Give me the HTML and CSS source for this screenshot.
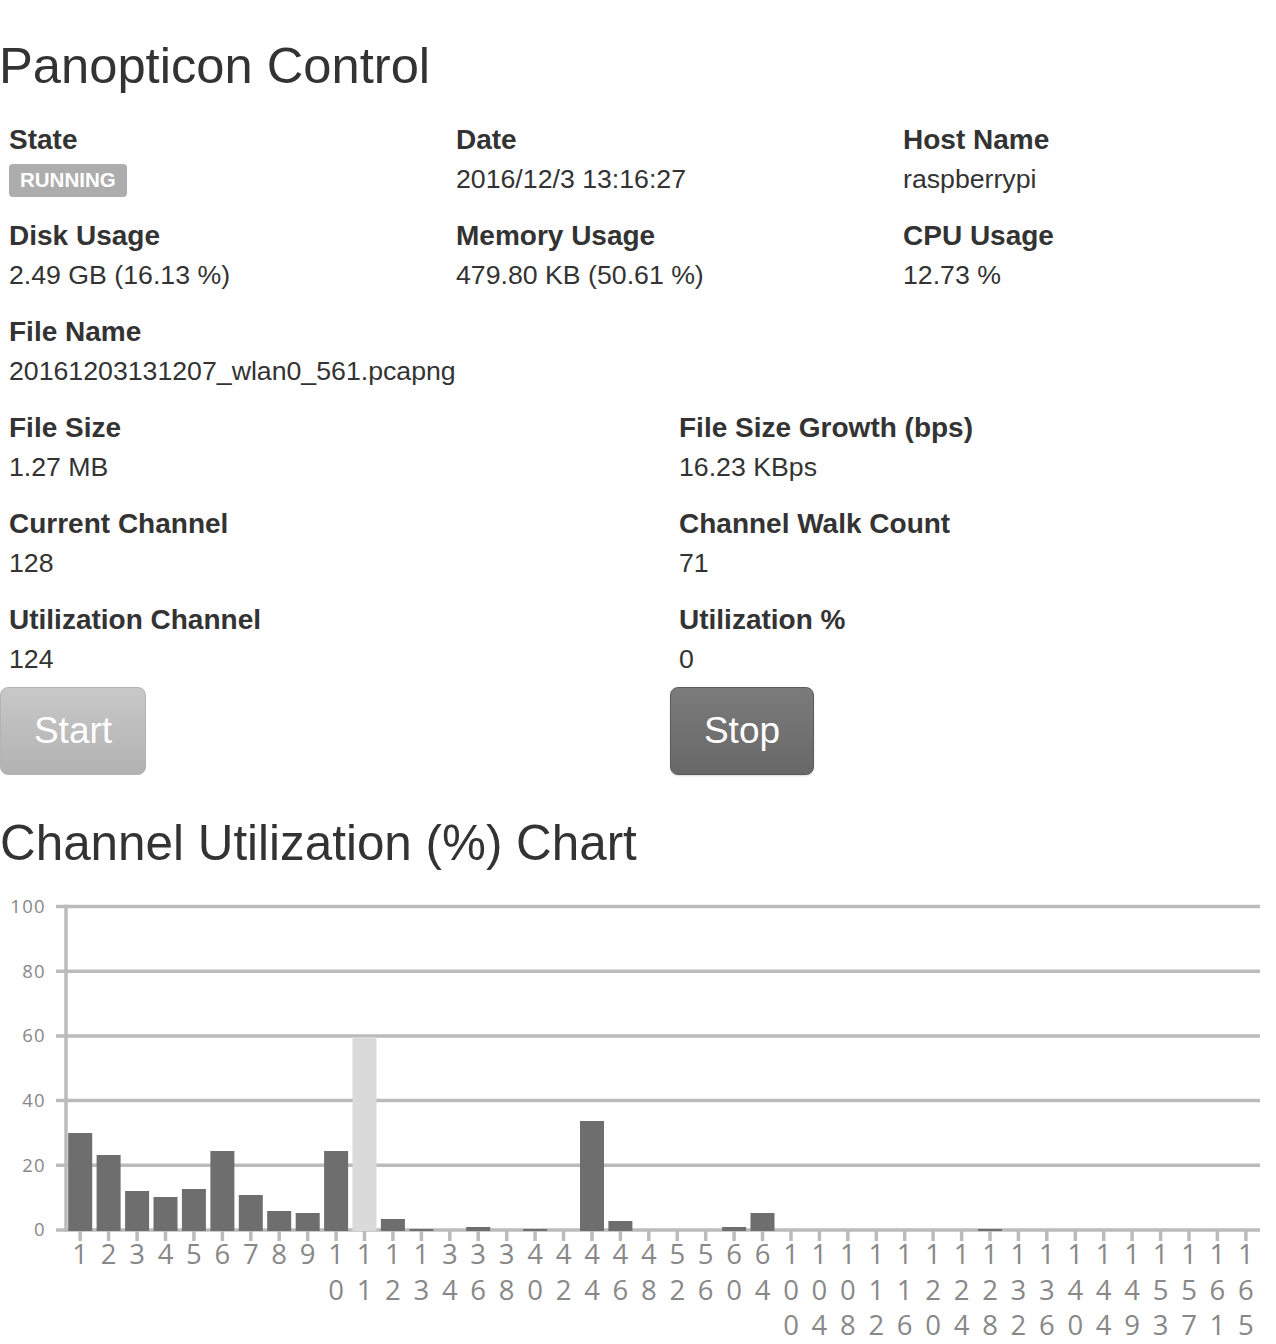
FILE: index.html
```html
<!DOCTYPE html>
<html lang="en">
<head>
<meta charset="utf-8">
<title>Panopticon Control</title>
<link rel="stylesheet" href="styles.css">
</head>
<body>
<main class="page">
  <h1 class="title">Panopticon Control</h1>

  <section class="grid3">
    <div class="field"><div class="label">State</div><div class="value"><span class="badge">RUNNING</span></div></div>
    <div class="field"><div class="label">Date</div><div class="value">2016/12/3 13:16:27</div></div>
    <div class="field"><div class="label">Host Name</div><div class="value">raspberrypi</div></div>
    <div class="field"><div class="label">Disk Usage</div><div class="value">2.49 GB (16.13 %)</div></div>
    <div class="field"><div class="label">Memory Usage</div><div class="value">479.80 KB (50.61 %)</div></div>
    <div class="field"><div class="label">CPU Usage</div><div class="value">12.73 %</div></div>
    <div class="field"><div class="label">File Name</div><div class="value">20161203131207_wlan0_561.pcapng</div></div>
  </section>

  <section class="grid2">
    <div class="field"><div class="label">File Size</div><div class="value">1.27 MB</div></div>
    <div class="field"><div class="label">File Size Growth (bps)</div><div class="value">16.23 KBps</div></div>
    <div class="field"><div class="label">Current Channel</div><div class="value">128</div></div>
    <div class="field"><div class="label">Channel Walk Count</div><div class="value">71</div></div>
    <div class="field"><div class="label">Utilization Channel</div><div class="value">124</div></div>
    <div class="field"><div class="label">Utilization %</div><div class="value">0</div></div>
  </section>

  <section class="actions">
    <div><button class="btn btn-start" type="button">Start</button></div>
    <div><button class="btn btn-stop" type="button">Stop</button></div>
  </section>

  <h2 class="chart-title">Channel Utilization (%) Chart</h2>

  <svg class="chart" width="1276" height="454" viewBox="0 890 1276 454" xmlns="http://www.w3.org/2000/svg">
    <g class="grid-lines">
      <line x1="56" y1="907.5" x2="1260" y2="907.5"/>
      <line x1="56" y1="972.2" x2="1260" y2="972.2"/>
      <line x1="56" y1="1036.9" x2="1260" y2="1036.9"/>
      <line x1="56" y1="1101.6" x2="1260" y2="1101.6"/>
      <line x1="56" y1="1166.3" x2="1260" y2="1166.3"/>
      <line x1="56" y1="1231" x2="1260" y2="1231"/>
      <line x1="66" y1="905.75" x2="66" y2="1232.75"/>
    </g>
    <g class="axis-y">
      <text x="46" y="913.8">100</text>
      <text x="46" y="978.5">80</text>
      <text x="46" y="1043.2">60</text>
      <text x="46" y="1107.9">40</text>
      <text x="46" y="1172.6">20</text>
      <text x="46" y="1237.3">0</text>
    </g>
    <g class="bars">
      <rect x="68.2" y="1134" width="24" height="98"/>
      <rect x="96.6" y="1156" width="24" height="76"/>
      <rect x="125.1" y="1192" width="24" height="40"/>
      <rect x="153.5" y="1198" width="24" height="34"/>
      <rect x="181.9" y="1190" width="24" height="42"/>
      <rect x="210.4" y="1152" width="24" height="80"/>
      <rect x="238.8" y="1196" width="24" height="36"/>
      <rect x="267.2" y="1212" width="24" height="20"/>
      <rect x="295.7" y="1214" width="24" height="18"/>
      <rect x="324.1" y="1152" width="24" height="80"/>
      <rect class="bar-hl" x="352.5" y="1038" width="24" height="194"/>
      <rect x="380.9" y="1220" width="24" height="12"/>
      <rect x="409.4" y="1230" width="24" height="2"/>
      <rect x="466.2" y="1228" width="24" height="4"/>
      <rect x="523.1" y="1230" width="24" height="2"/>
      <rect x="580" y="1122" width="24" height="110"/>
      <rect x="608.4" y="1222" width="24" height="10"/>
      <rect x="722.1" y="1228" width="24" height="4"/>
      <rect x="750.5" y="1214" width="24" height="18"/>
      <rect x="978" y="1230" width="24" height="2"/>
    </g>
    <g class="ticks">
      <line x1="80.2" y1="1232" x2="80.2" y2="1242"/>
      <line x1="108.6" y1="1232" x2="108.6" y2="1242"/>
      <line x1="137.1" y1="1232" x2="137.1" y2="1242"/>
      <line x1="165.5" y1="1232" x2="165.5" y2="1242"/>
      <line x1="193.9" y1="1232" x2="193.9" y2="1242"/>
      <line x1="222.4" y1="1232" x2="222.4" y2="1242"/>
      <line x1="250.8" y1="1232" x2="250.8" y2="1242"/>
      <line x1="279.2" y1="1232" x2="279.2" y2="1242"/>
      <line x1="307.7" y1="1232" x2="307.7" y2="1242"/>
      <line x1="336.1" y1="1232" x2="336.1" y2="1242"/>
      <line x1="364.5" y1="1232" x2="364.5" y2="1242"/>
      <line x1="392.9" y1="1232" x2="392.9" y2="1242"/>
      <line x1="421.4" y1="1232" x2="421.4" y2="1242"/>
      <line x1="449.8" y1="1232" x2="449.8" y2="1242"/>
      <line x1="478.2" y1="1232" x2="478.2" y2="1242"/>
      <line x1="506.7" y1="1232" x2="506.7" y2="1242"/>
      <line x1="535.1" y1="1232" x2="535.1" y2="1242"/>
      <line x1="563.5" y1="1232" x2="563.5" y2="1242"/>
      <line x1="592" y1="1232" x2="592" y2="1242"/>
      <line x1="620.4" y1="1232" x2="620.4" y2="1242"/>
      <line x1="648.8" y1="1232" x2="648.8" y2="1242"/>
      <line x1="677.3" y1="1232" x2="677.3" y2="1242"/>
      <line x1="705.7" y1="1232" x2="705.7" y2="1242"/>
      <line x1="734.1" y1="1232" x2="734.1" y2="1242"/>
      <line x1="762.5" y1="1232" x2="762.5" y2="1242"/>
      <line x1="791" y1="1232" x2="791" y2="1242"/>
      <line x1="819.4" y1="1232" x2="819.4" y2="1242"/>
      <line x1="847.8" y1="1232" x2="847.8" y2="1242"/>
      <line x1="876.3" y1="1232" x2="876.3" y2="1242"/>
      <line x1="904.7" y1="1232" x2="904.7" y2="1242"/>
      <line x1="933.1" y1="1232" x2="933.1" y2="1242"/>
      <line x1="961.6" y1="1232" x2="961.6" y2="1242"/>
      <line x1="990" y1="1232" x2="990" y2="1242"/>
      <line x1="1018.4" y1="1232" x2="1018.4" y2="1242"/>
      <line x1="1046.8" y1="1232" x2="1046.8" y2="1242"/>
      <line x1="1075.3" y1="1232" x2="1075.3" y2="1242"/>
      <line x1="1103.7" y1="1232" x2="1103.7" y2="1242"/>
      <line x1="1132.1" y1="1232" x2="1132.1" y2="1242"/>
      <line x1="1160.6" y1="1232" x2="1160.6" y2="1242"/>
      <line x1="1189" y1="1232" x2="1189" y2="1242"/>
      <line x1="1217.4" y1="1232" x2="1217.4" y2="1242"/>
      <line x1="1245.9" y1="1232" x2="1245.9" y2="1242"/>
    </g>
    <g class="axis-x">
      <text><tspan x="80.2" y="1265">1</tspan></text>
      <text><tspan x="108.6" y="1265">2</tspan></text>
      <text><tspan x="137.1" y="1265">3</tspan></text>
      <text><tspan x="165.5" y="1265">4</tspan></text>
      <text><tspan x="193.9" y="1265">5</tspan></text>
      <text><tspan x="222.4" y="1265">6</tspan></text>
      <text><tspan x="250.8" y="1265">7</tspan></text>
      <text><tspan x="279.2" y="1265">8</tspan></text>
      <text><tspan x="307.7" y="1265">9</tspan></text>
      <text><tspan x="336.1" y="1265">1</tspan><tspan x="336.1" y="1300.5">0</tspan></text>
      <text><tspan x="364.5" y="1265">1</tspan><tspan x="364.5" y="1300.5">1</tspan></text>
      <text><tspan x="392.9" y="1265">1</tspan><tspan x="392.9" y="1300.5">2</tspan></text>
      <text><tspan x="421.4" y="1265">1</tspan><tspan x="421.4" y="1300.5">3</tspan></text>
      <text><tspan x="449.8" y="1265">3</tspan><tspan x="449.8" y="1300.5">4</tspan></text>
      <text><tspan x="478.2" y="1265">3</tspan><tspan x="478.2" y="1300.5">6</tspan></text>
      <text><tspan x="506.7" y="1265">3</tspan><tspan x="506.7" y="1300.5">8</tspan></text>
      <text><tspan x="535.1" y="1265">4</tspan><tspan x="535.1" y="1300.5">0</tspan></text>
      <text><tspan x="563.5" y="1265">4</tspan><tspan x="563.5" y="1300.5">2</tspan></text>
      <text><tspan x="592" y="1265">4</tspan><tspan x="592" y="1300.5">4</tspan></text>
      <text><tspan x="620.4" y="1265">4</tspan><tspan x="620.4" y="1300.5">6</tspan></text>
      <text><tspan x="648.8" y="1265">4</tspan><tspan x="648.8" y="1300.5">8</tspan></text>
      <text><tspan x="677.3" y="1265">5</tspan><tspan x="677.3" y="1300.5">2</tspan></text>
      <text><tspan x="705.7" y="1265">5</tspan><tspan x="705.7" y="1300.5">6</tspan></text>
      <text><tspan x="734.1" y="1265">6</tspan><tspan x="734.1" y="1300.5">0</tspan></text>
      <text><tspan x="762.5" y="1265">6</tspan><tspan x="762.5" y="1300.5">4</tspan></text>
      <text><tspan x="791" y="1265">1</tspan><tspan x="791" y="1300.5">0</tspan><tspan x="791" y="1336">0</tspan></text>
      <text><tspan x="819.4" y="1265">1</tspan><tspan x="819.4" y="1300.5">0</tspan><tspan x="819.4" y="1336">4</tspan></text>
      <text><tspan x="847.8" y="1265">1</tspan><tspan x="847.8" y="1300.5">0</tspan><tspan x="847.8" y="1336">8</tspan></text>
      <text><tspan x="876.3" y="1265">1</tspan><tspan x="876.3" y="1300.5">1</tspan><tspan x="876.3" y="1336">2</tspan></text>
      <text><tspan x="904.7" y="1265">1</tspan><tspan x="904.7" y="1300.5">1</tspan><tspan x="904.7" y="1336">6</tspan></text>
      <text><tspan x="933.1" y="1265">1</tspan><tspan x="933.1" y="1300.5">2</tspan><tspan x="933.1" y="1336">0</tspan></text>
      <text><tspan x="961.6" y="1265">1</tspan><tspan x="961.6" y="1300.5">2</tspan><tspan x="961.6" y="1336">4</tspan></text>
      <text><tspan x="990" y="1265">1</tspan><tspan x="990" y="1300.5">2</tspan><tspan x="990" y="1336">8</tspan></text>
      <text><tspan x="1018.4" y="1265">1</tspan><tspan x="1018.4" y="1300.5">3</tspan><tspan x="1018.4" y="1336">2</tspan></text>
      <text><tspan x="1046.8" y="1265">1</tspan><tspan x="1046.8" y="1300.5">3</tspan><tspan x="1046.8" y="1336">6</tspan></text>
      <text><tspan x="1075.3" y="1265">1</tspan><tspan x="1075.3" y="1300.5">4</tspan><tspan x="1075.3" y="1336">0</tspan></text>
      <text><tspan x="1103.7" y="1265">1</tspan><tspan x="1103.7" y="1300.5">4</tspan><tspan x="1103.7" y="1336">4</tspan></text>
      <text><tspan x="1132.1" y="1265">1</tspan><tspan x="1132.1" y="1300.5">4</tspan><tspan x="1132.1" y="1336">9</tspan></text>
      <text><tspan x="1160.6" y="1265">1</tspan><tspan x="1160.6" y="1300.5">5</tspan><tspan x="1160.6" y="1336">3</tspan></text>
      <text><tspan x="1189" y="1265">1</tspan><tspan x="1189" y="1300.5">5</tspan><tspan x="1189" y="1336">7</tspan></text>
      <text><tspan x="1217.4" y="1265">1</tspan><tspan x="1217.4" y="1300.5">6</tspan><tspan x="1217.4" y="1336">1</tspan></text>
      <text><tspan x="1245.9" y="1265">1</tspan><tspan x="1245.9" y="1300.5">6</tspan><tspan x="1245.9" y="1336">5</tspan></text>
    </g>
  </svg>
</main>
</body>
</html>
```

FILE: styles.css
```css
html, body {
  margin: 0;
  padding: 0;
  background: #fff;
  overflow: hidden;
}

body {
  font-family: "Liberation Sans", Arial, Helvetica, sans-serif;
  color: #333;
}

.page {
  width: 1276px;
}

.title {
  margin: 0 0 0 -1px;
  padding-top: 36px;
  font-size: 50.7px;
  line-height: 60px;
  font-weight: normal;
  color: #333;
}

.grid3 {
  display: grid;
  grid-template-columns: 447px 447px 382px;
  row-gap: 18px;
  margin-top: 25px;
}

.grid2 {
  display: grid;
  grid-template-columns: 670px 606px;
  row-gap: 18px;
  margin-top: 18px;
}

.field {
  padding-left: 9px;
  min-width: 0;
}

.label {
  font-size: 28px;
  font-weight: bold;
  line-height: 38px;
  white-space: nowrap;
}

.value {
  font-size: 26.7px;
  line-height: 40px;
  white-space: nowrap;
}

.badge {
  display: inline-block;
  vertical-align: top;
  margin-top: 5px;
  padding: 0 11px 1px;
  background: #adadad;
  color: #fff;
  font-size: 20.5px;
  font-weight: bold;
  line-height: 32px;
  border-radius: 4px;
}

.actions {
  display: grid;
  grid-template-columns: 670px 606px;
  margin-top: 8px;
}

.btn {
  display: flex;
  align-items: center;
  justify-content: center;
  box-sizing: border-box;
  height: 88px;
  margin: 0;
  padding: 0;
  border-radius: 8px;
  font-family: "Liberation Sans", Arial, sans-serif;
  font-size: 37px;
  color: #fff;
  cursor: pointer;
}

.btn-start {
  width: 146px;
  background: linear-gradient(#c8c8c8, #b2b2b2);
  border: 1px solid #b4b4b4;
}

.btn-stop {
  width: 144px;
  background: linear-gradient(#7b7b7b, #686868);
  border: 1px solid #5c5c5c;
  box-shadow: 0 1px 2px rgba(0, 0, 0, 0.15);
}

.chart-title {
  margin: 38px 0 0;
  font-size: 49.4px;
  line-height: 60px;
  font-weight: normal;
  color: #333;
}

.chart {
  display: block;
  margin-top: 16px;
}

.grid-lines line,
.ticks line {
  stroke: #bbb;
  stroke-width: 3.5;
}

.bars rect {
  fill: #6e6e6e;
}

.bars .bar-hl {
  fill: #dadada;
}

.axis-y text {
  font-family: "Open Sans", "DejaVu Sans", sans-serif;
  font-size: 18.5px;
  letter-spacing: 1.3px;
  fill: #888;
  text-anchor: end;
}

.axis-x text {
  font-family: "Open Sans", "DejaVu Sans", sans-serif;
  font-size: 27.5px;
  fill: #888;
  text-anchor: middle;
}
```
